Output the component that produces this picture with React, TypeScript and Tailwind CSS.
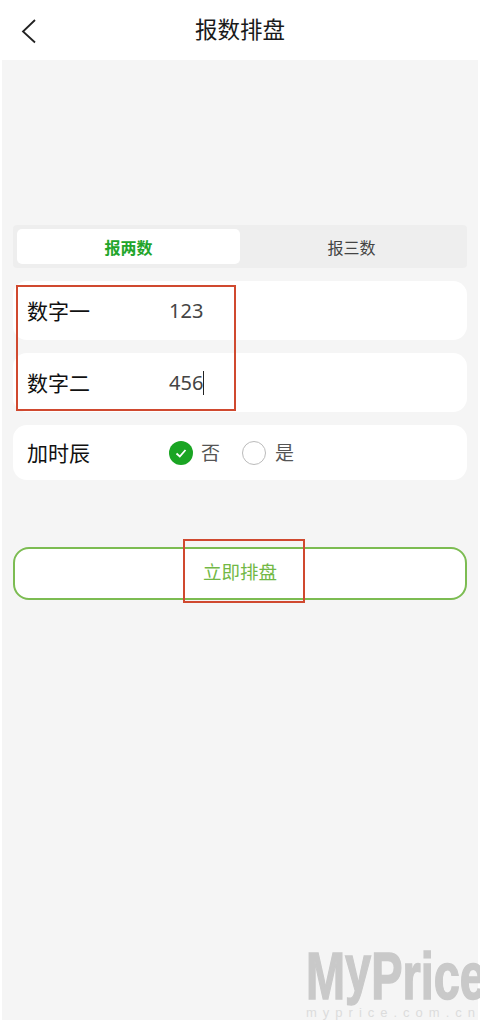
const cjk = "font-['Noto_Sans_CJK_SC','Noto_Sans',sans-serif]";

function InputRow({ label, value, caret }: { label: string; value: string; caret?: boolean }) {
  return (
    <div className="flex h-[59px] items-center rounded-[14px] bg-white pl-[14px]">
      <span className="w-[142px] text-[21px] text-[#111]">{label}</span>
      <span className="flex items-center font-['Noto_Sans',sans-serif] text-[20px] text-[#444]">
        {value}
        {caret && <span className="h-[24px] w-px bg-[#222]" />}
      </span>
    </div>
  );
}

export default function App() {
  return (
    <div className={`relative h-[1020px] w-[480px] overflow-hidden bg-white ${cjk}`}>
      {/* Header */}
      <div className="relative flex h-[60px] items-center justify-center">
        <svg className="absolute left-[20px] top-[18px] h-[26px] w-[18px]" viewBox="0 0 18 26" fill="none" stroke="#222" strokeWidth={1.8}>
          <path d="M15 2 L3 13.5 L15 24.5" />
        </svg>
        <span className="-mt-[2px] text-[22.5px] text-[#1a1a1a]">报数排盘</span>
      </div>

      {/* Body */}
      <div className="mx-[2px] h-[960px] bg-[#f5f5f5] px-[11px] pt-[165px]">
        <div className="flex h-[43px] rounded-[4px] bg-[#eeeeee] p-[4px]">
          <div className="flex w-[223px] items-center justify-center rounded-[5px] bg-white text-[16px] font-bold text-[#22a52a]">
            报两数
          </div>
          <div className="flex flex-1 items-center justify-center text-[16px] text-[#444]">报三数</div>
        </div>

        <div className="mt-[13px] flex flex-col gap-[13px]">
          <InputRow label="数字一" value="123" />
          <InputRow label="数字二" value="456" caret />
          <div className="flex h-[55px] items-center rounded-[14px] bg-white pl-[14px]">
            <span className="w-[142px] text-[21px] text-[#111]">加时辰</span>
            <span className="flex h-[24px] w-[24px] items-center justify-center rounded-full bg-[#1aa523]">
              <svg className="h-[14px] w-[14px]" viewBox="0 0 14 14" fill="none" stroke="white" strokeWidth={1.8}>
                <path d="M2.5 7.5 L5.8 10.5 L11.5 4" />
              </svg>
            </span>
            <span className="ml-[8px] text-[19px] text-[#555]">否</span>
            <span className="ml-[22px] h-[24px] w-[24px] rounded-full border border-[#bbb] bg-white" />
            <span className="ml-[9px] text-[19px] text-[#555]">是</span>
          </div>
        </div>

        <div className="mt-[67px] flex h-[53px] items-center justify-center rounded-[16px] border-2 border-[#7cbc52] bg-white pb-[3px] text-[18.5px] text-[#72b845]">
          立即排盘
        </div>
      </div>

      {/* Red annotation boxes */}
      <div className="absolute left-[16px] top-[285px] h-[126px] w-[220px] border-2 border-[#d0492f]" />
      <div className="absolute left-[183px] top-[539px] h-[64px] w-[122px] border-2 border-[#d0492f]" />

      {/* Watermark */}
      <div className="absolute left-[306px] top-[952px] origin-left scale-x-[0.7] whitespace-nowrap font-['Liberation_Sans',sans-serif] text-[67px] leading-[48px] font-bold text-[#c9c9c9] [-webkit-text-stroke:1.5px_#c9c9c9]">
        M<span className="inline-block -translate-y-[8px]">y</span>Price
      </div>
      <div className="absolute left-[306px] top-[1005px] whitespace-nowrap font-['Liberation_Sans',sans-serif] text-[13px] leading-[15px] tracking-[6px] text-[#dcdcdc]">
        myprice.com.cn
      </div>
    </div>
  );
}
